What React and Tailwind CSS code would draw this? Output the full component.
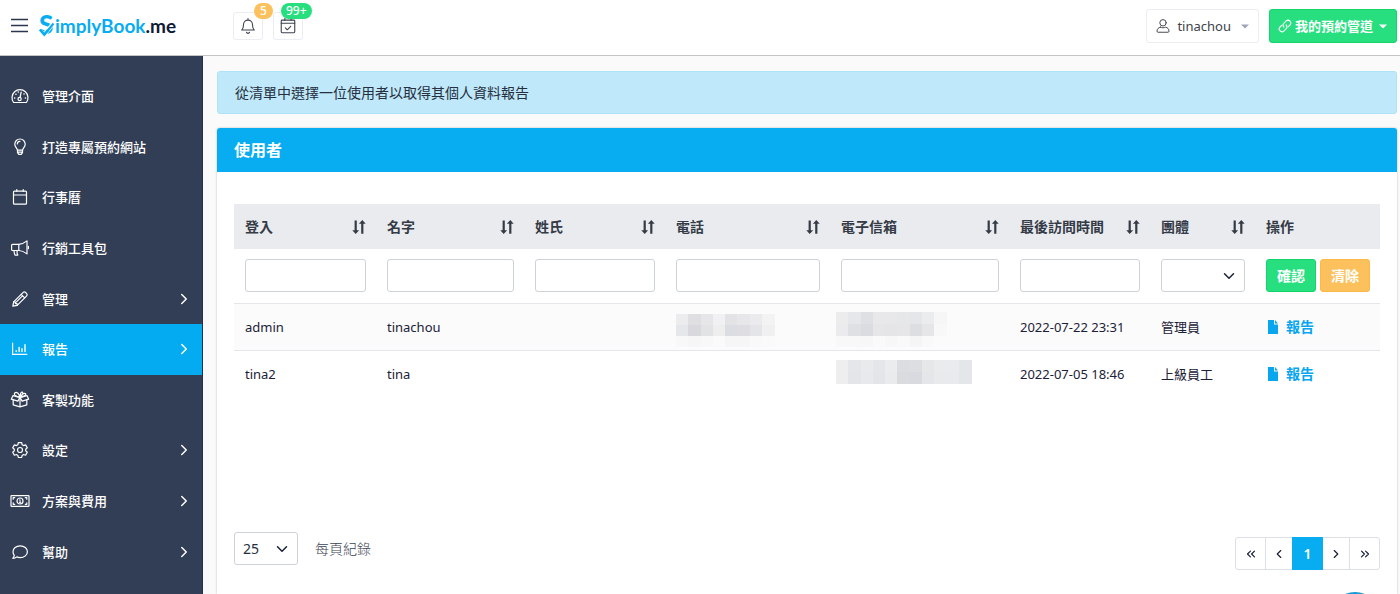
import React, { useState } from "react";
import {
  ChevronDown,
  ChevronLeft,
  ChevronRight,
  ChevronsLeft,
  ChevronsRight,
} from "lucide-react";

const Icon = ({ children, className = "h-5 w-5" }) => (
  <svg
    viewBox="0 0 20 20"
    fill="none"
    stroke="currentColor"
    strokeWidth="1.2"
    strokeLinecap="round"
    strokeLinejoin="round"
    className={className}
    aria-hidden="true"
  >
    {children}
  </svg>
);

const icons = {
  dashboard: (
    <Icon>
      <path d="M3.6 16.5h12.8a8 8 0 1 0-12.8 0z" />
      <circle cx="9.6" cy="13" r="1.6" />
      <path d="M10.1 11.4l1-5.2" />
      <path d="M4.6 12h.1M5.9 8.2h.1M8.2 6.1h.1M14 8h.1M15.4 12h.1" strokeWidth="1.5" />
    </Icon>
  ),
  bulb: (
    <Icon>
      <path d="M7.4 13.2c0-1.9-2.6-3-2.6-6a5.2 5.2 0 0 1 10.4 0c0 3-2.6 4.1-2.6 6z" />
      <path d="M7.5 13.4v2.2l1.3 1.7h2.4l1.3-1.7v-2.2M7.6 15.2h4.8" />
      <path d="M7.3 7a2.7 2.7 0 0 1 2.6-2.6" />
    </Icon>
  ),
  calendar: (
    <Icon>
      <rect x="3.5" y="4.2" width="13" height="13" rx="1" />
      <path d="M3.5 8h13M6.8 2.5v1.7M13.2 2.5v1.7" />
    </Icon>
  ),
  megaphone: (
    <Icon>
      <path d="M2.600 6.300h6.200c3.300 0 5.800-1.500 8.200-3.400v13c-2.400-1.900-4.900-3.400-8.200-3.400H2.600a1 1 0 0 1-1-1V7.300a1 1 0 0 1 1-1z" />
      <path d="M8.800 6.300v6.200M4 12.500c0 1.800.4 3 1 4.600h2.800c-.8-1.300-1-2.800-.7-4.600M18.400 8.300v2.400" />
    </Icon>
  ),
  pencil: (
    <Icon>
      <path d="M2.800 17.200l.9-4.400L13.200 3.300a1.500 1.500 0 0 1 2.100 0l1.400 1.400a1.500 1.500 0 0 1 0 2.100l-9.500 9.500z" />
      <path d="M11.200 5.300l3.500 3.500M3.800 12.800l1.600.2v1.600H7l.2 1.600M6.400 12.900l5.800-5.800" />
    </Icon>
  ),
  chart: (
    <Icon>
      <path d="M2.600 4v11.400h14.200" />
      <path d="M6.200 12.600v-1M9.100 12.600V8.400M12 12.600V9.800M15 12.600V5.800" strokeWidth="1.4" />
    </Icon>
  ),
  gift: (
    <Icon>
      <path d="M10 7.400L3 5.600 1.300 9.200l6.600 1.900L10 7.400l2.100 3.700 6.600-1.900L17 5.600z" />
      <path d="M3.200 9.900v5l6.800 2 6.800-2v-5M10 7.600v9.200" />
      <path d="M9.800 7.200C5.600 6.600 3.400 4.600 4.800 3c1.600-1.600 4.400.4 5 4.200zM10.200 7.200c0-3.200.5-5.200 2-5 1.200.3.600 3-2 5zM10.400 7.200c1.200-2.600 3.400-4.600 5-3.600 1.200.9-.6 3-5 3.600z" />
    </Icon>
  ),
  cog: (
    <Icon>
      <circle cx="10" cy="10" r="2.500" />
      <path d="M8.300 2.600h3.400l.4 2.100 1.500.9 2-.7 1.700 2.900-1.600 1.400v1.700l1.600 1.400-1.700 2.900-2-.7-1.500.9-.4 2.100H8.300l-.4-2.100-1.500-.9-2 .7-1.700-2.900 1.600-1.400V9.200L2.700 7.800l1.700-2.900 2 .7 1.500-.9z" />
    </Icon>
  ),
  money: (
    <Icon>
      <rect x="1" y="4.600" width="18" height="10.800" rx=".6" />
      <circle cx="10" cy="10" r="3" />
      <path d="M9.500 8.900l.6-.3v2.800M9.400 11.400h1.400" strokeWidth=".9" />
      <path d="M3.200 8.200V6.700h1.500M16.800 8.200V6.700h-1.500M3.200 11.800v1.500h1.500M16.800 11.800v1.500h-1.500" />
    </Icon>
  ),
  comment: (
    <Icon>
      <path d="M10.200 3.800c4 0 7.200 2.600 7.200 5.900s-3.200 5.900-7.200 5.900c-1.200 0-2.400-.2-3.400-.7-1.100.9-2.500 1.400-4 1.400.8-.9 1.400-1.900 1.500-3-.8-1-1.300-2.300-1.300-3.600 0-3.300 3.200-5.900 7.200-5.900z" />
    </Icon>
  ),
};

const menu = [
  { label: "管理介面", icon: "dashboard" },
  { label: "打造專屬預約網站", icon: "bulb" },
  { label: "行事曆", icon: "calendar" },
  { label: "行銷工具包", icon: "megaphone" },
  { label: "管理", icon: "pencil", nested: true },
  { label: "報告", icon: "chart", nested: true, active: true },
  { label: "客製功能", icon: "gift" },
  { label: "設定", icon: "cog", nested: true },
  { label: "方案與費用", icon: "money", nested: true },
  { label: "幫助", icon: "comment", nested: true },
];

const columns = [
  { label: "登入", key: "login", width: "w-[142px]" },
  { label: "名字", key: "firstName", width: "w-[148px]" },
  { label: "姓氏", key: "lastName", width: "w-[141px]" },
  { label: "電話", key: "phone", width: "w-[165px]" },
  { label: "電子信箱", key: "email", width: "w-[179px]" },
  { label: "最後訪問時間", key: "lastVisit", width: "w-[141px]" },
  { label: "團體", key: "group", width: "w-[105px]" },
];

const users = [
  {
    login: "admin",
    firstName: "tinachou",
    phone: {
      left: 12,
      top: 7,
      size: 11,
      rows: [
        ["#ececee", "#dfdfe2", "#e6e6e9", "#f1f1f3", "#e3e3e6", "#e7e7ea", "#ebebed", "#f3f3f4"],
        ["#e6e7ea", "#d9d9dd", "#e2e3e5", "#eeeeef", "#dcdde2", "#dedee2", "#e4e5e8", "#f0f0f0"],
        ["#f8f8f8", "#f6f6f6", "#f8f8f8", "#fafafa", "#f6f6f7", "#f6f6f7", "#f9f9f9", "#fafafa"],
      ],
    },
    email: {
      left: 7,
      top: 5,
      size: 12,
      rows: [
        ["#ececec", "#e6e7ea", "#dfe0e4", "#e8e8ea", "#e8e8ea", "#e6e7e9", "#e5e6e9", "#ebecee", "#f6f6f6"],
        ["#ebebee", "#dfe0e3", "#dbdce1", "#e6e6e9", "#e5e5e8", "#e6e6e9", "#dddee2", "#e6e6e9", "#f8f8f8"],
        ["#f8f8f8", "#f8f8f8", "#f7f7f7", "#fafafa", "#f7f7f7", "#f9f9f9", "#f5f5f5", "#f9f9f9", "#fbfbfb"],
      ],
    },
    lastVisit: "2022-07-22 23:31",
    group: "管理員",
  },
  {
    login: "tina2",
    firstName: "tina",
    email: {
      left: 7,
      top: 6,
      size: 12,
      rows: [
        ["#eeeeef", "#e5e6e9", "#e9eaec", "#e5e6e9", "#ebecee", "#dcdde1", "#dcdee2", "#e6e7e9", "#eaebed", "#eaebee", "#e5e6e9"],
        ["#eeeeef", "#e4e5e8", "#e8e9ec", "#e4e5e8", "#eaebed", "#d9dbdf", "#d8dadf", "#e5e6e9", "#e9eaec", "#e9eaed", "#e5e6e9"],
      ],
    },
    lastVisit: "2022-07-05 18:46",
    group: "上級員工",
  },
];

// Private values are drawn as a pixelated strip
const Mosaic = ({ data }) => (
  <svg width="160" height="40" className="-my-2 -ml-3 block max-w-none" shapeRendering="crispEdges" role="img" aria-label="hidden">
    {data.rows.map((row, y) =>
      row.map((fill, x) => (
        <rect
          key={`${x}-${y}`}
          x={data.left + Math.round(x * 12.25)}
          y={data.top + y * data.size}
          width="13"
          height={data.size}
          fill={fill}
        />
      ))
    )}
  </svg>
);

const SortIcon = () => (
  <svg width="14" height="16" viewBox="0 0 14 16" fill="currentColor" aria-hidden="true">
    <path d="M2.600 1.500h2.200v9.800h2.300L3.700 15 .3 11.300h2.300z" />
    <path d="M9.200 14.800V4.800H6.900L10.300 1l3.400 3.800h-2.300v10z" />
  </svg>
);

const Caret = ({ className }) => (
  <svg width="8" height="5" viewBox="0 0 8 5" fill="currentColor" className={className} aria-hidden="true">
    <path d="M0 .5h8L4 4.500z" />
  </svg>
);

const Logo = () => (
  <a
    href="#home"
    aria-label="SimplyBook.me"
    className="flex items-center font-[Lato,sans-serif] text-[19px] leading-6 font-bold text-[#08acf0]"
  >
    <svg width="16" height="30" viewBox="0 0 16 30" className="overflow-visible" aria-hidden="true">
      <text x="0" y="23" fontSize="26" fontWeight="900" fontFamily="Lato, sans-serif" fill="#08acf0">
        S
      </text>
      <path d="M-1 18.500L5.500 23.500L15.500 10.500" fill="none" stroke="#fff" strokeWidth="4" />
      <path d="M.8 18.500L5.300 23.600L9 19.200" fill="none" stroke="#08acf0" strokeWidth="2.600" />
      <path d="M8 20.500L14.500 12.500" fill="none" stroke="#08acf0" strokeWidth="2" />
    </svg>
    <span>implyBook</span>
    <span className="text-[#0f1a33]">.me</span>
  </a>
);

const Header = () => (
  <header className="flex h-14 items-center justify-between border-b border-[#c4c4c6] bg-white pr-[3px] pb-[3px] pl-[10px]">
    <div className="flex items-center">
      <button type="button" aria-label="選單" className="mr-[10px] text-[#2c3650]">
        <svg width="19" height="16" viewBox="0 0 19 16" stroke="currentColor" strokeWidth="1.600" aria-hidden="true">
          <path d="M1 1.500h17M1 7.500h17M1 13.500h17" />
        </svg>
      </button>
      <div className="w-[194px]">
        <Logo />
      </div>
      <div className="flex gap-[10px]">
        <button
          type="button"
          aria-label="通知"
          className="relative flex h-7 w-[30px] items-center justify-center rounded-[3px] border border-[#ececf3] text-[#3c4150]"
        >
          <Icon className="h-[18px] w-[18px]">
            <path d="M3 14.500c1.500-1.500 2-2.600 2-6a5 5 0 0 1 10 0c0 3.400.5 4.500 2 6zM10 3.500V1.800M8.300 17a1.800 1.800 0 0 0 3.400 0" />
          </Icon>
          <span className="absolute -top-[10px] left-5 rounded-full bg-[#fcc15c] px-[6px] text-[12px] leading-4 font-medium text-white">
            5
          </span>
        </button>
        <button
          type="button"
          aria-label="預約"
          className="relative flex h-7 w-[30px] items-center justify-center rounded-[3px] border border-[#ececf3] text-[#3c4150]"
        >
          <Icon className="h-[18px] w-[18px]">
            <rect x="2.500" y="3.500" width="15" height="14" rx="1" />
            <path d="M2.500 7h15M6.500 1.500v2M13.500 1.500v2M7 12l2.200 2.200L13 10.400" />
          </Icon>
          <span className="absolute -top-[10px] left-[7px] rounded-full bg-[#27df7f] px-[5px] text-[12px] leading-4 font-medium text-white">
            99+
          </span>
        </button>
      </div>
    </div>

    <div className="flex gap-[10px] text-[13px] leading-5">
      <button type="button" className="flex h-[34px] items-center rounded-[3px] border border-[#ececf5] pr-[9px] pl-2 text-[#3e434b]">
        <Icon className="mr-[6px] h-4 w-4">
          <circle cx="10" cy="6" r="4" />
          <path d="M6.800 11.500C4 12 2.500 14 2.500 16.500c0 .8.5 1.300 1.300 1.300h12.400c.8 0 1.300-.5 1.300-1.300 0-2.500-1.500-4.500-4.300-5-2 1-4.400 1-6.400 0z" />
        </Icon>
        tinachou
        <Caret className="ml-[10px] text-[#a0a4b8]" />
      </button>
      <button
        type="button"
        className="flex h-[34px] items-center rounded-[3px] border border-[#12d56c] bg-[#27df7f] pr-[9px] pl-2 font-bold text-white"
      >
        <Icon className="mr-[3px] h-[14px] w-[14px]">
          <path d="M8.500 11.500a4 4 0 0 1 0-5.600l3.300-3.300a4 4 0 0 1 5.600 5.600l-2.600 2.600" strokeWidth="1.600" />
          <path d="M11.500 8.500a4 4 0 0 1 0 5.600l-3.300 3.300a4 4 0 0 1-5.600-5.600l2.600-2.600" strokeWidth="1.600" />
        </Icon>
        我的預約管道
        <Caret className="ml-[6px]" />
      </button>
    </div>
  </header>
);

const Sidebar = () => (
  <nav className="flex w-[203px] shrink-0 flex-col border-r border-[#26304a] bg-[#323e55] pt-[15px] pb-[17px] text-[13px] leading-5 text-white">
    {menu.map((item) => (
      <a
        key={item.label}
        href="#menu"
        className={`flex min-h-12 flex-1 items-center gap-3 pr-[9px] pl-[10px] font-medium ${
          item.active ? "bg-[#05abf0]" : ""
        }`}
      >
        {icons[item.icon]}
        <span className="flex-1">{item.label}</span>
        {item.nested && <ChevronRight className="h-[18px] w-[18px]" />}
      </a>
    ))}
  </nav>
);

const fieldClass = "block h-[33px] w-full rounded-[3px] border border-[#cdd3db] bg-white px-2";

const UserTable = () => {
  const [filters, setFilters] = useState({});

  const handleFilterChange = (e) => {
    const { name, value } = e.target;
    setFilters((prev) => ({ ...prev, [name]: value }));
  };

  return (
    <table className="w-full table-fixed text-left text-[13px] leading-[18px] text-[#1a2138]">
      <thead>
        <tr className="bg-[#eaebef] text-[14px] text-[#343b46]">
          {columns.map((col) => (
            <th key={col.key} className={`h-[45px] pr-[10px] pl-[11px] font-bold ${col.width}`}>
              <span className="flex items-center justify-between">
                {col.label}
                <SortIcon />
              </span>
            </th>
          ))}
          <th className="w-[125px] pr-[10px] pl-[11px] font-bold">操作</th>
        </tr>
      </thead>
      <tbody>
        <tr>
          {columns.map((col) => (
            <td key={col.key} className="h-[54px] pr-[10px] pl-[11px]">
              {col.key === "group" ? (
                <div className="relative">
                  <select
                    name="group"
                    aria-label={col.label}
                    value={filters.group || ""}
                    onChange={handleFilterChange}
                    className={`${fieldClass} appearance-none`}
                  >
                    <option value=""></option>
                    <option value="admin">管理員</option>
                    <option value="senior">上級員工</option>
                  </select>
                  <ChevronDown className="pointer-events-none absolute top-2 right-[7px] h-[18px] w-[18px]" />
                </div>
              ) : (
                <input
                  type="text"
                  name={col.key}
                  aria-label={col.label}
                  value={filters[col.key] || ""}
                  onChange={handleFilterChange}
                  className={fieldClass}
                />
              )}
            </td>
          ))}
          <td className="pr-[10px] pl-[11px]">
            <div className="flex gap-1 text-[14px] font-bold text-white">
              <button type="button" className="h-[33px] rounded-[3px] border border-[#12d56c] bg-[#27df7f] px-[10px]">
                確認
              </button>
              <button
                type="button"
                onClick={() => setFilters({})}
                className="h-[33px] rounded-[3px] border border-[#fbb945] bg-[#fcc15c] px-[10px]"
              >
                清除
              </button>
            </div>
          </td>
        </tr>
        {users.map((user) => (
          <tr key={user.login} className="border-t border-[#e4e6ea] even:bg-[#fbfbfb]">
            {columns.map((col) => (
              <td key={col.key} className="h-[47px] pr-[10px] pl-[11px]">
                {user[col.key] && user[col.key].rows ? <Mosaic data={user[col.key]} /> : user[col.key]}
              </td>
            ))}
            <td className="pr-[10px] pl-[11px]">
              <a href="#report" className="flex items-center gap-2 pl-[2px] text-[14px] font-bold text-[#08a6ee]">
                <svg width="10" height="14" viewBox="0 0 10 14" fill="currentColor" aria-hidden="true">
                  <path d="M0 0h6v4.500h4V14H0zM7 0l3 3.500H7z" />
                </svg>
                報告
              </a>
            </td>
          </tr>
        ))}
      </tbody>
    </table>
  );
};

const pageButton = "flex items-center justify-center border-[#dcdfe5]";

const Pagination = () => (
  <nav aria-label="分頁" className="flex h-[33px] rounded-[3px] border border-[#dcdfe5] text-[#1a2138]">
    <button type="button" aria-label="第一頁" className={`${pageButton} w-[30px] border-r`}>
      <ChevronsLeft className="h-[14px] w-[14px]" />
    </button>
    <button type="button" aria-label="上一頁" className={`${pageButton} w-[26px]`}>
      <ChevronLeft className="h-[14px] w-[14px]" />
    </button>
    <button type="button" aria-current="page" className="-my-px w-[31px] bg-[#08acf0] text-[14px] font-semibold text-white">
      1
    </button>
    <button type="button" aria-label="下一頁" className={`${pageButton} w-[26px]`}>
      <ChevronRight className="h-[14px] w-[14px]" />
    </button>
    <button type="button" aria-label="最後一頁" className={`${pageButton} w-[30px] border-l`}>
      <ChevronsRight className="h-[14px] w-[14px]" />
    </button>
  </nav>
);

const App = () => {
  const [perPage, setPerPage] = useState("25");

  return (
    <div className="flex min-h-screen flex-col bg-[#fafafa] font-['Noto_Sans','Noto_Sans_CJK_TC',sans-serif]">
      <Header />
      <div className="flex flex-1">
        <Sidebar />
        <main className="flex min-w-0 flex-1 flex-col pt-[15px] pr-[3px] pl-[14px]">
          <div className="mb-[14px] flex min-h-[43px] items-center rounded-[3px] border border-[#aee2f7] bg-[#bfe9fa] px-[17px] text-[14px] leading-5 text-[#262f40]">
            從清單中選擇一位使用者以取得其個人資料報告
          </div>

          <section className="flex flex-1 flex-col rounded-t-[3px] bg-white shadow-[0_0_2px_rgba(0,0,0,0.3)]">
            <h1 className="rounded-t-[3px] bg-[#08acf0] px-[17px] py-[10px] text-[16px] leading-6 font-bold text-white">
              使用者
            </h1>
            <div className="flex flex-1 flex-col justify-between gap-10 px-[17px] pt-8 pb-6">
              <UserTable />
              <div className="flex items-end justify-between">
                <div className="flex items-center gap-[17px] pb-[5px] text-[14px]">
                  <div className="relative">
                    <select
                      id="per-page"
                      value={perPage}
                      onChange={(e) => setPerPage(e.target.value)}
                      className="h-[33px] w-16 appearance-none rounded-[3px] border border-[#cdd3db] bg-white px-2 text-[#262f40]"
                    >
                      <option>25</option>
                      <option>50</option>
                      <option>100</option>
                    </select>
                    <ChevronDown className="pointer-events-none absolute top-2 right-[7px] h-[18px] w-[18px] text-[#1a2138]" />
                  </div>
                  <label htmlFor="per-page" className="font-light text-[#3a4253]">
                    每頁紀錄
                  </label>
                </div>
                <Pagination />
              </div>
            </div>
          </section>
        </main>
      </div>

      {/* Help bubble, tucked under the bottom edge until it is focused */}
      <button
        type="button"
        aria-label="客服"
        className="fixed right-[21px] -bottom-[46px] h-12 w-12 rounded-full bg-[#1b9ad6] focus:bottom-4"
      ></button>
    </div>
  );
};

export default App;
